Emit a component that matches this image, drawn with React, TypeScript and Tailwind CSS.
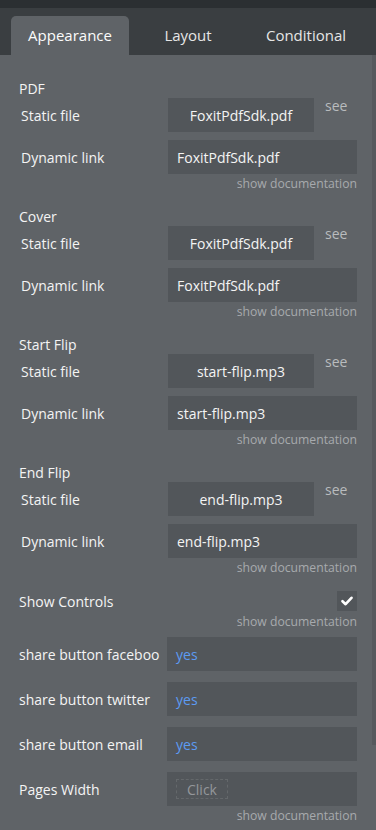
import React from "react";

const font = { fontFamily: '"Open Sans", "Noto Sans", sans-serif' };

function Doc() {
  return (
    <div className="h-[16px] mt-[2px] flex justify-end items-center text-[12.2px] leading-[16px] text-[#a7aaad] pr-[15px]">
      show documentation
    </div>
  );
}

function Section({ title, file }: { title: string; file: string }) {
  return (
    <div className="mb-[14px]">
      <div className="h-[20px] flex items-center text-[14px] text-[#f4f4f4]">{title}</div>
      <div className="flex h-[34px]">
        <div className="w-[149px] pl-[2px] flex items-center text-[14px] text-[#f4f4f4]">Static file</div>
        <div className="w-[146px] bg-[#52565a] flex items-center justify-center text-[14px] text-[#f4f4f4]">{file}</div>
        <div className="ml-[11px] -mt-[2px] text-[14px] leading-[20px] text-[#b9bcbe]">see</div>
      </div>
      <div className="flex h-[34px] mt-[8px] pr-[15px]">
        <div className="w-[149px] pl-[2px] flex items-center text-[14px] text-[#f4f4f4]">Dynamic link</div>
        <div className="flex-1 bg-[#52565a] flex items-center pl-[9px] text-[14px] text-[#f4f4f4]">{file}</div>
      </div>
      <Doc />
    </div>
  );
}

function Row({ label, children }: { label: string; children: React.ReactNode }) {
  return (
    <div className="flex h-[34px] pr-[15px]">
      <div className="w-[148px] flex items-center text-[14px] text-[#f4f4f4] whitespace-nowrap overflow-hidden">{label}</div>
      <div className="flex-1 bg-[#52565a] flex items-center pl-[9px] text-[14px]">{children}</div>
    </div>
  );
}

export default function App() {
  return (
    <div style={font} className="w-[376px] h-[830px] bg-[#5f6367] flex flex-col overflow-hidden">
      <div className="h-[8px] bg-[#2b2f32]" />
      <div className="h-[47px] bg-[#3a3e41] pt-[8px] pl-[11px] flex">
        <div className="w-[118px] h-[39px] bg-[#5f6367] rounded-t-[5px] flex items-center justify-center text-[15px] text-[#fbfbfb]">
          Appearance
        </div>
        <div className="w-[118px] h-[39px] flex items-center justify-center text-[15px] text-[#e6e6e6]">Layout</div>
        <div className="w-[118px] h-[39px] flex items-center justify-center text-[15px] text-[#e6e6e6]">Conditional</div>
      </div>
      <div className="flex flex-1">
        <div className="flex-1 pl-[19px] pt-[23px]">
          <Section title="PDF" file="FoxitPdfSdk.pdf" />
          <Section title="Cover" file="FoxitPdfSdk.pdf" />
          <Section title="Start Flip" file="start-flip.mp3" />
          <Section title="End Flip" file="end-flip.mp3" />
          <div className="flex h-[22px] items-center justify-between pr-[15px]">
            <div className="text-[14px] text-[#f4f4f4]">Show Controls</div>
            <div className="w-[20px] h-[20px] bg-[#52565a] flex items-center justify-center">
              <svg width="12" height="10" viewBox="0 0 12 10">
                <path d="M1.5 5.2 L4.6 8.2 L10.5 1.8" fill="none" stroke="#ffffff" strokeWidth="2.6" strokeLinecap="round" strokeLinejoin="round" />
              </svg>
            </div>
          </div>
          <Doc />
          <div className="mt-[7px] flex flex-col gap-[11px]">
            <Row label="share button faceboo">
              <span className="text-[#5c9bf2]">yes</span>
            </Row>
            <Row label="share button twitter">
              <span className="text-[#5c9bf2]">yes</span>
            </Row>
            <Row label="share button email">
              <span className="text-[#5c9bf2]">yes</span>
            </Row>
            <Row label="Pages Width">
              <span className="border border-dashed border-[#64686b] px-[10px] h-[20px] flex items-center text-[#94979a]">Click</span>
            </Row>
          </div>
          <Doc />
        </div>
        <div className="w-[4px]">
          <div className="h-[690px] bg-[#56595d]" />
        </div>
      </div>
    </div>
  );
}
